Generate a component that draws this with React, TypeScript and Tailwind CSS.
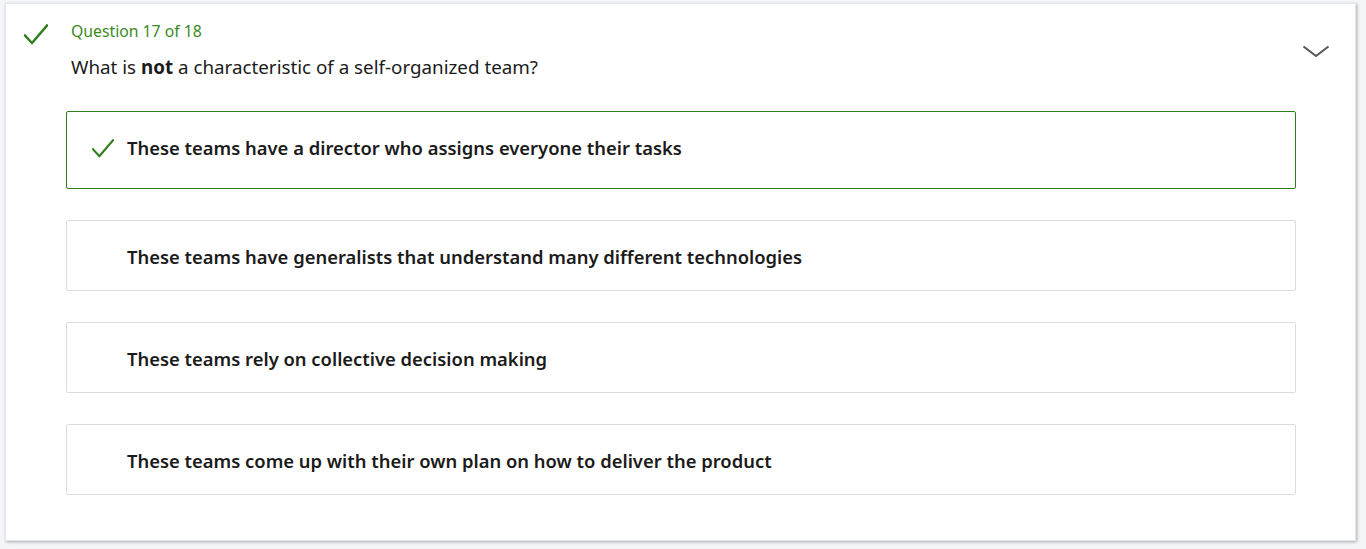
import React from "react";

const options = [
  { text: "These teams have a director who assigns everyone their tasks", correct: true },
  { text: "These teams have generalists that understand many different technologies", correct: false },
  { text: "These teams rely on collective decision making", correct: false },
  { text: "These teams come up with their own plan on how to deliver the product", correct: false },
];

function Check({ className }: { className?: string }) {
  return (
    <svg viewBox="0 0 24 21" className={className} fill="none">
      <path d="M1 11.5 L8 19 L23 1.5" stroke="#2e7d1a" strokeWidth="2.4" strokeLinecap="square" />
    </svg>
  );
}

export default function App() {
  return (
    <div className="h-[549px] w-[1366px] bg-[#f3f5f8] pl-[5px] pt-[3px] font-['Segoe_UI','Noto_Sans',sans-serif]">
      <div className="h-[538px] w-[1351px] bg-white shadow-[1px_1px_3px_rgba(0,0,0,0.3)] border border-[#e3e6ea]">
        <div className="flex">
          <div className="w-[65px] pl-[18px] pt-[20px]">
            <Check className="h-[21px] w-[24px]" />
          </div>
          <div className="flex-1">
            <div className="pt-[16px] text-[15.75px] leading-[22px] text-[#3b8a1f]">Question 17 of 18</div>
            <div className="pt-[13px] text-[18.8px] leading-[24px] text-[#1b1b1b]">
              What is <span className="font-bold">not</span> a characteristic of a self-organized team?
            </div>
          </div>
          <div className="pr-[25px] pt-[41px]">
            <svg viewBox="0 0 28 13" className="h-[13px] w-[28px]" fill="none">
              <path d="M1.5 1.5 L14 11 L26.5 1.5" stroke="#555" strokeWidth="2" />
            </svg>
          </div>
        </div>
        <div className="ml-[60px] mr-[59px] mt-[32px] flex flex-col gap-[31px]">
          {options.map((o) =>
            o.correct ? (
              <div key={o.text} className="flex h-[78px] items-start rounded-[2px] border border-[#2e7d1a] pl-[25px] pt-[24px]">
                <Check className="mr-[13px] mt-[3px] h-[19px] w-[22px]" />
                <span className="text-[18.4px] leading-[24px] font-semibold text-[#1b1b1b]">{o.text}</span>
              </div>
            ) : (
              <div key={o.text} className="flex h-[71px] items-start rounded-[2px] border border-[#dcdcdc] pl-[60px] pt-[24px]">
                <span className="text-[18.4px] leading-[24px] font-semibold text-[#1b1b1b]">{o.text}</span>
              </div>
            )
          )}
        </div>
      </div>
    </div>
  );
}
